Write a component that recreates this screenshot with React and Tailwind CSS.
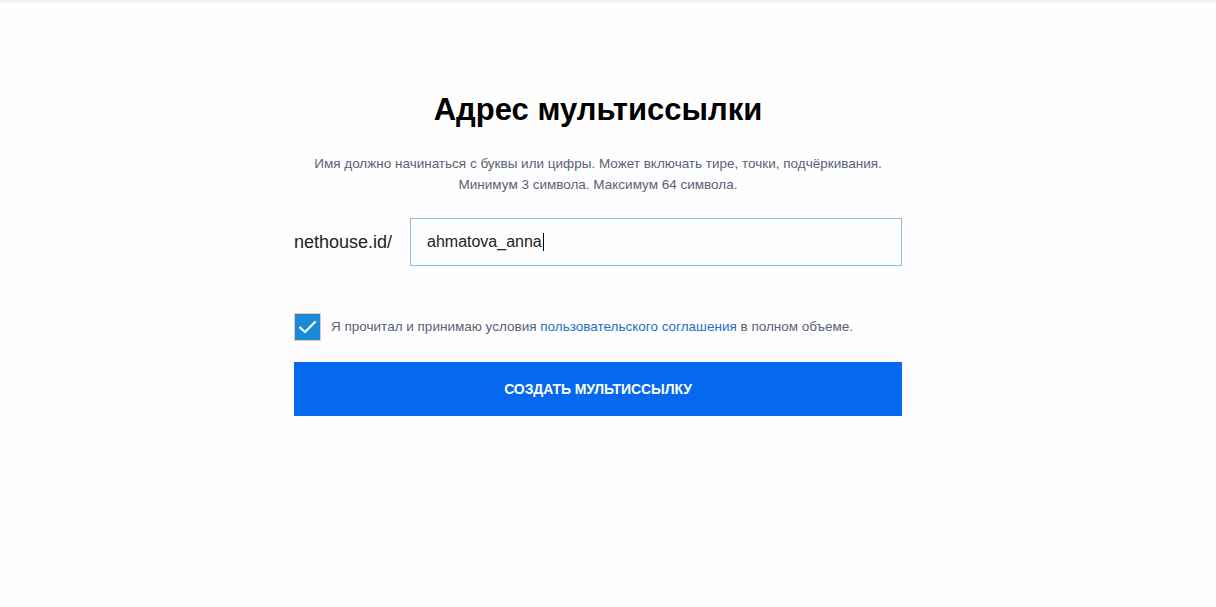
export default function App() {
  return (
    <div className="min-h-[607px] w-full bg-[#fefefe] font-['Liberation_Sans',Arial,sans-serif]">
      {/* thin tinted strip along the top edge */}
      <div className="h-[4px] bg-gradient-to-b from-[#ece9fb] to-[#fefefe]" />
      <div className="flex justify-center pr-5">
        <div className="flex w-[608px] flex-col">
          <h1 className="mt-[86px] text-center text-[31px] font-bold leading-[40px] text-black">
            Адрес мультиссылки
          </h1>
          <p className="mt-[23px] text-center text-[13.5px] leading-[21px] text-[#5a6275]">
            Имя должно начинаться с буквы или цифры. Может включать тире, точки, подчёркивания.
            <br />
            Минимум 3 символа. Максимум 64 символа.
          </p>
          <div className="mt-[23px] flex items-center">
            <span className="w-[116px] text-[18px] text-[#222]">nethouse.id/</span>
            <div className="flex h-[48px] flex-1 items-center border border-[#86bde0] px-[16px] text-[16px] text-[#222]">
              <span>ahmatova_anna</span>
              <span className="ml-[1px] h-[18px] w-px bg-black" />
            </div>
          </div>
          <label className="mt-[47px] flex items-center gap-[10px]">
            <span className="flex h-[28px] w-[27px] items-center justify-center border border-[#f3c3c3] bg-[#1a8bd8]">
              <svg width="19" height="14" viewBox="0 0 19 14" fill="none">
                <path d="M2 7.5 L7 12 L17 2" stroke="#fff" strokeWidth="2.2" strokeLinecap="round" strokeLinejoin="round" />
              </svg>
            </span>
            <span className="text-[13.5px] text-[#5a6275]">
              Я прочитал и принимаю условия{" "}
              <a className="text-[#1f6fc7]">пользовательского соглашения</a> в полном объеме.
            </span>
          </label>
          <button className="mt-[21px] h-[54px] w-full bg-[#0468f0] text-[14px] font-bold uppercase tracking-[-0.1px] text-white">
            Создать мультиссылку
          </button>
        </div>
      </div>
    </div>
  );
}
